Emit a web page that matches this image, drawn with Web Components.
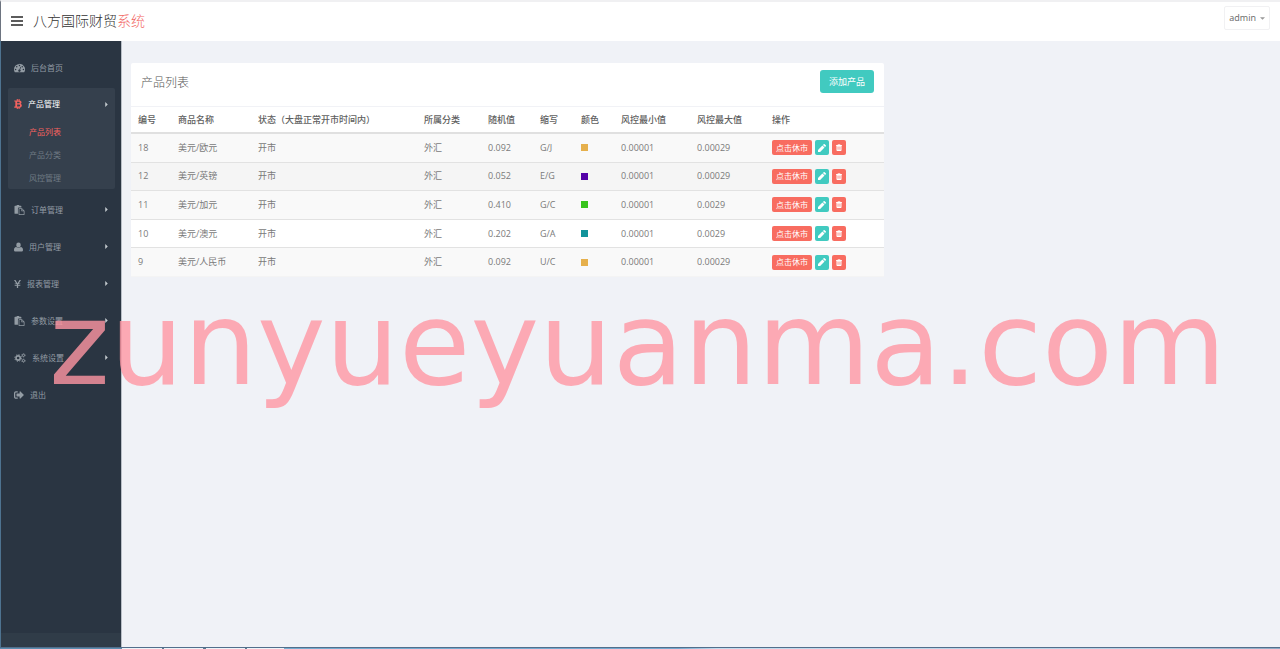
<!DOCTYPE html>
<html lang="zh-CN">
<head>
<meta charset="utf-8">
<title>八方国际财贸系统</title>
<style>
  html, body { margin: 0; height: 100%; }
  body {
    font-family: "Open Sans", "Noto Sans CJK SC", sans-serif;
    font-size: 9px; line-height: 12px; color: #7a7a7a; background: #f0f2f7;
    overflow: hidden;
  }
</style>
</head>
<body>
<admin-app></admin-app>
<script>
const icons = {
  bars: ['0 0 12 10', '<path d="M0 0h12v2H0zM0 4h12v2H0zM0 8h12v2H0z"/>'],
  dash: ['0 0 16 14', '<path fill-rule="evenodd" d="M8 1a8 8 0 0 0-8 8c0 1.600.5 3 1.200 4.300h13.600A8 8 0 0 0 8 1zM2.300 8a1.100 1.100 0 1 1 0 2.200 1.100 1.100 0 0 1 0-2.200zM4 4a1.100 1.100 0 1 1 0 2.200A1.100 1.100 0 0 1 4 4zM8 2.200a1.100 1.100 0 1 1 0 2.200 1.100 1.100 0 0 1 0-2.200zM12 4a1.100 1.100 0 1 1 0 2.200A1.100 1.100 0 0 1 12 4zM13.700 8a1.100 1.100 0 1 1 0 2.200 1.100 1.100 0 0 1 0-2.200zM9.300 5.300l.9.3-1.300 3.800a1.700 1.700 0 1 1-1-.3z"/>'],
  btc: ['0 0 12 16', '<path fill-rule="evenodd" d="M4 0h1.700v2.200h1.200V0h1.700v2.400c1.900.3 3 1.300 3 2.900 0 1.100-.5 1.900-1.500 2.300 1.300.4 2 1.400 2 2.800 0 2-1.400 3.200-3.500 3.400V16H6.900v-2.200H5.700V16H4v-2.200H0V12h1.700V4H0V2.200h4zM4.600 4.200v2.700h2.200c1.200 0 1.900-.5 1.900-1.400 0-.9-.7-1.300-1.900-1.300zM4.600 8.900v3h2.600c1.300 0 2.100-.5 2.100-1.500s-.8-1.500-2.100-1.500z"/>'],
  paste: ['0 0 16 16', '<path fill-rule="evenodd" d="M1 1h2.500V0h4v1H10a1 1 0 0 1 1 1v2H7a1.500 1.500 0 0 0-1.500 1.500V14H1a1 1 0 0 1-1-1V2a1 1 0 0 1 1-1zM7.300 5H12l4 4v6.300a.7.7 0 0 1-.7.700H7.300a.7.700 0 0 1-.7-.7V5.700a.7.700 0 0 1 .7-.7zM7.800 6.200v8.600h7V10H11V6.200zM12.100 6.700V8.900h2.200z"/>'],
  user: ['0 0 14 14', '<path d="M7 0a3.500 3.700 0 0 1 3.500 3.700C10.500 6 8.900 7.900 7 7.900S3.500 6 3.500 3.700A3.500 3.700 0 0 1 7 0zM3.600 7A4.700 4.700 0 0 0 7 8.700 4.700 4.700 0 0 0 10.400 7C13 7.200 14 9 14 11.700 14 13.200 13.200 14 12 14H2C.8 14 0 13.200 0 11.700 0 9 1 7.200 3.600 7z"/>'],
  yen: ['0 0 12 14', '<path d="M0 0h2.500L6 5.800 9.500 0H12L8.200 6.300h2.600v1.300H7.100v1.300h3.700v1.300H7.100V14H4.900v-3.800H1.200V8.900h3.700V7.600H1.200V6.300h2.600z"/>'],
  cogs: ['0 0 18 16', '<g fill="none" stroke="currentColor"><circle cx="6" cy="8" r="3.400" stroke-width="2.600"/><circle cx="6" cy="8" r="5.300" stroke-width="1.600" stroke-dasharray="2.100 2.060"/><circle cx="14.500" cy="3.700" r="1.800" stroke-width="1.500"/><circle cx="14.500" cy="3.700" r="2.900" stroke-width="1" stroke-dasharray="1.500 1.540"/><circle cx="14.500" cy="12.300" r="1.800" stroke-width="1.500"/><circle cx="14.500" cy="12.300" r="2.900" stroke-width="1" stroke-dasharray="1.500 1.540"/></g>'],
  exit: ['0 0 512 512', '<path d="M497 273L329 441c-15 15-41 4.500-41-17v-96H152c-13.300 0-24-10.700-24-24v-96c0-13.300 10.700-24 24-24h136V88c0-21.400 25.900-32 41-17l168 168c9.300 9.400 9.300 24.600 0 34zM192 436v-40c0-6.600-5.400-12-12-12H96c-17.700 0-32-14.300-32-32V160c0-17.700 14.300-32 32-32h84c6.600 0 12-5.400 12-12V76c0-6.600-5.400-12-12-12H96c-53 0-96 43-96 96v192c0 53 43 96 96 96h84c6.600 0 12-5.400 12-12z"/>'],
  pencil: ['0 0 14 14', '<path d="M0 14v-3.700l7.700-7.700 3.700 3.700L3.700 14zM8.600 1.700L9.900.4a1.300 1.300 0 0 1 1.800 0l1.900 1.900a1.300 1.300 0 0 1 0 1.800l-1.300 1.300z"/>'],
  trash: ['0 0 12 14', '<path fill-rule="evenodd" d="M4 0h4l.8 2H12v1.500h-1V12.500A1.500 1.500 0 0 1 9.500 14h-7A1.500 1.500 0 0 1 1 12.500v-9H0V2h3.200zM4.700 1.200L4.400 2h3.200l-.3-.8zM3.300 5v6.500h1V5zM5.500 5v6.500h1V5zM7.700 5v6.500h1V5z"/>'],
  caret: ['0 0 6 3', '<path d="M0 0h6L3 3z"/>'],
  arrow: ['0 0 3 6', '<path d="M0 0l3 3-3 3z"/>']
};

class UiIcon extends HTMLElement {
  connectedCallback() {
    const [box, art] = icons[this.getAttribute('name')];
    this.attachShadow({ mode: 'open' }).innerHTML =
      `<style>:host{display:block;flex:none;width:10px;height:10px}svg{display:block;width:100%;height:100%;fill:currentColor}</style>
       <svg viewBox="${box}" aria-hidden="true">${art}</svg>`;
  }
}
customElements.define('ui-icon', UiIcon);

class TopBar extends HTMLElement {
  connectedCallback() {
    this.attachShadow({ mode: 'open' }).innerHTML = `
      <style>
        :host { display: flex; align-items: center; box-sizing: border-box; height: 41px;
          padding: 0 10px 2px; background: #fff; border-top: 2px solid #f0f0f2;
          border-left: 1px solid #6d7480; }
        button { font: inherit; color: inherit; background: none; border: 0; padding: 0; }
        .toggle { color: #5c5c5c; }
        .toggle ui-icon { width: 12px; height: 10px; }
        a { margin-left: 10px; font-size: 14px; line-height: 20px; color: #333; text-decoration: none; font-weight: 300; }
        a span { color: #f2665f; }
        .user { display: flex; align-items: center; gap: 4px; margin: 0 0 5px auto;
          height: 24px; padding: 0 4px; border: 1px solid #f1f1f3; border-radius: 2px; color: #666; }
        .user ui-icon { width: 5px; height: 3px; color: #999; }
      </style>
      <button class="toggle" aria-label="切换菜单"><ui-icon name="bars"></ui-icon></button>
      <a href="#">八方国际财贸<span>系统</span></a>
      <button class="user">admin<ui-icon name="caret"></ui-icon></button>`;
  }
}
customElements.define('top-bar', TopBar);

class NavItem extends HTMLElement {
  connectedCallback() {
    const arrow = this.hasAttribute('leaf') ? '' : '<ui-icon class="arrow" name="arrow"></ui-icon>';
    this.attachShadow({ mode: 'open' }).innerHTML = `
      <style>
        :host { display: block; color: #939ca4; border-radius: 2px; }
        :host([open]) { background: #35404d; }
        a { display: flex; align-items: center; height: 33px; padding: 0 7px 0 6px; color: inherit;
          text-decoration: none; font-size: 8px; }
        :host([open]) a { height: 32px; color: #fff; }
        .icon { margin-right: 6px; width: var(--icon-width, 10px); }
        :host([open]) .icon { color: #f5625f; }
        .arrow { width: 3px; height: 5px; margin-left: auto; color: #c5cbd0; }
      </style>
      <a href="#"><ui-icon class="icon" name="${this.getAttribute('icon')}"></ui-icon>${this.getAttribute('label')}${arrow}</a>
      <slot></slot>`;
  }
}
customElements.define('nav-item', NavItem);

class SubItem extends HTMLElement {
  connectedCallback() {
    this.attachShadow({ mode: 'open' }).innerHTML = `
      <style>
        :host { display: block; color: #6f7a84; }
        :host([active]) { color: #f5625f; }
        a { display: block; padding-left: 21px; font-size: 8px; line-height: 23px; color: inherit; text-decoration: none; }
      </style><a href="#"><slot></slot></a>`;
  }
}
customElements.define('sub-item', SubItem);

class SideBar extends HTMLElement {
  connectedCallback() {
    this.attachShadow({ mode: 'open' }).innerHTML = `
      <style>
        :host { display: flex; flex-direction: column; box-sizing: border-box; width: 122px; flex: none;
          background: #2a3542; border-left: 1px solid #4e7390; border-right: 1px solid #b9bfc7; }
        nav { display: flex; flex-direction: column; gap: 4px; padding: 10px 6px 0 7px; flex: 1; }
        .foot { height: 14px; background: #303c48; }
      </style>
      <nav>
        <nav-item leaf icon="dash" label="后台首页" style="--icon-width:11px"></nav-item>
        <nav-item open icon="btc" label="产品管理" style="--icon-width:8px">
          <sub-item active>产品列表</sub-item>
          <sub-item>产品分类</sub-item>
          <sub-item>风控管理</sub-item>
        </nav-item>
        <nav-item icon="paste" label="订单管理" style="--icon-width:11px"></nav-item>
        <nav-item icon="user" label="用户管理" style="--icon-width:9px"></nav-item>
        <nav-item icon="yen" label="报表管理" style="--icon-width:7px"></nav-item>
        <nav-item icon="paste" label="参数设置" style="--icon-width:11px"></nav-item>
        <nav-item icon="cogs" label="系统设置" style="--icon-width:12px"></nav-item>
        <nav-item leaf icon="exit" label="退出"></nav-item>
      </nav>
      <div class="foot"></div>`;
  }
}
customElements.define('side-bar', SideBar);

class UiPanel extends HTMLElement {
  connectedCallback() {
    this.attachShadow({ mode: 'open' }).innerHTML = `
      <style>
        :host { display: block; background: #fff; border-radius: 2px; }
        header { display: flex; align-items: flex-end; justify-content: space-between;
          padding: 7px 10px 13px; border-bottom: 1px solid #f1f2f6; }
        h2 { margin: 0; font-size: 12px; line-height: 20px; font-weight: 300; color: #555; }
      </style>
      <header><h2>${this.getAttribute('heading')}</h2><slot name="action"></slot></header>
      <slot></slot>`;
  }
}
customElements.define('ui-panel', UiPanel);

class ProductTable extends HTMLElement {
  connectedCallback() {
    const widths = [40, 80, 166, 64, 52, 41, 40, 76, 75, 119];
    const heads = ['编号', '商品名称', '状态（大盘正常开市时间内）', '所属分类', '随机值', '缩写', '颜色', '风控最小值', '风控最大值', '操作'];
    const rows = [
      ['18', '美元/欧元', '0.092', 'G/J', '#e6b04c', '0.00029'],
      ['12', '美元/英镑', '0.052', 'E/G', '#5402a8', '0.00029'],
      ['11', '美元/加元', '0.410', 'G/C', '#38c41c', '0.0029'],
      ['10', '美元/澳元', '0.202', 'G/A', '#12939a', '0.0029'],
      ['9', '美元/人民币', '0.092', 'U/C', '#e6b04c', '0.00029']
    ];
    const body = rows.map(([id, name, rand, code, color, max]) => `
      <tr><td>${id}</td><td>${name}</td><td>开市</td><td>外汇</td><td>${rand}</td><td>${code}</td>
      <td><i style="background:${color}"></i></td><td>0.00001</td><td>${max}</td>
      <td><div class="actions"><button>点击休市</button>
        <button class="edit" aria-label="编辑"><ui-icon name="pencil"></ui-icon></button>
        <button class="del" aria-label="删除"><ui-icon name="trash"></ui-icon></button></div></td></tr>`).join('');
    this.attachShadow({ mode: 'open' }).innerHTML = `
      <style>
        :host { display: block; }
        table { width: 100%; height: 170px; table-layout: fixed; border-collapse: separate; border-spacing: 0;
          font: inherit; color: inherit; }
        th, td { padding: 0 0 0 7px; text-align: left; vertical-align: middle; white-space: nowrap; }
        thead th { height: 25px; border-bottom: 2px solid #e0e0e0; font-weight: 500; color: #606060; }
        td { border-bottom: 1px solid #e2e2e2; }
        tr:last-child td { border-bottom-color: #f4f4f4; }
        tbody tr:nth-child(odd) { background: #f9f9f9; }
        tbody tr:nth-child(2) { background: #f5f5f5; }
        i { display: block; width: 7px; height: 7px; }
        .actions { display: flex; gap: 3px; }
        button { display: flex; align-items: center; justify-content: center; height: 15px; margin: 0;
          padding: 0 4px; border: 0; border-radius: 2px; background: #f86c60; color: #fff;
          font: inherit; font-size: 8px; line-height: 12px; }
        .edit { background: #41cac0; }
        .edit, .del { width: 14px; padding: 0; }
        ui-icon { width: 8px; height: 8px; }
        .del ui-icon { height: 7px; }
      </style>
      <table>
        <colgroup>${widths.map(w => `<col style="width:${w}px">`).join('')}</colgroup>
        <thead><tr>${heads.map(h => `<th scope="col">${h}</th>`).join('')}</tr></thead>
        <tbody>${body}</tbody>
      </table>`;
  }
}
customElements.define('product-table', ProductTable);

class WaterMark extends HTMLElement {
  connectedCallback() {
    this.attachShadow({ mode: 'open' }).innerHTML = `
      <style>
        :host { position: absolute; left: 49px; top: 286px; font-family: "DejaVu Sans", sans-serif;
          font-size: 116px; line-height: 116px;
          white-space: nowrap; color: rgba(255, 150, 163, 0.8); pointer-events: none; }
      </style><slot></slot>`;
  }
}
customElements.define('water-mark', WaterMark);

class AdminApp extends HTMLElement {
  connectedCallback() {
    this.attachShadow({ mode: 'open' }).innerHTML = `
      <style>
        :host { display: flex; flex-direction: column; height: 100vh; }
        .body { display: flex; flex: 1; min-height: 0; }
        main { flex: 1; display: grid; grid-template-columns: 2fr 1fr; gap: 10px; align-items: start;
          padding: 22px 10px 0 9px; }
        .add { height: 23px; padding: 0 9px; border: 0; border-radius: 3px; background: #41cac0; color: #fff;
          font: inherit; }
        .edge { height: 1px; border-top: 1px solid #526f8c;
          background: linear-gradient(90deg, #5b8cae 122px, #eef3f8 122px, #eef3f8 162px, #5b7890 162px, #5b7890 164px,
            #eef3f8 164px, #eef3f8 203px, #5b7890 203px, #5b7890 206px, #eef3f8 206px, #eef3f8 245px, #5b7890 245px,
            #5b7890 247px, #eef3f8 247px, #eef3f8 284px, #75acd0 284px, #75a8cf 53%, #c4dcef 56%, #b8d0e4 90%, #8ea9c4); }
      </style>
      <top-bar></top-bar>
      <div class="body">
        <side-bar></side-bar>
        <main>
          <ui-panel heading="产品列表">
            <button class="add" slot="action">添加产品</button>
            <product-table></product-table>
          </ui-panel>
        </main>
      </div>
      <div class="edge"></div>
      <water-mark>zunyueyuanma.com</water-mark>`;
  }
}
customElements.define('admin-app', AdminApp);
</script>
</body>
</html>
